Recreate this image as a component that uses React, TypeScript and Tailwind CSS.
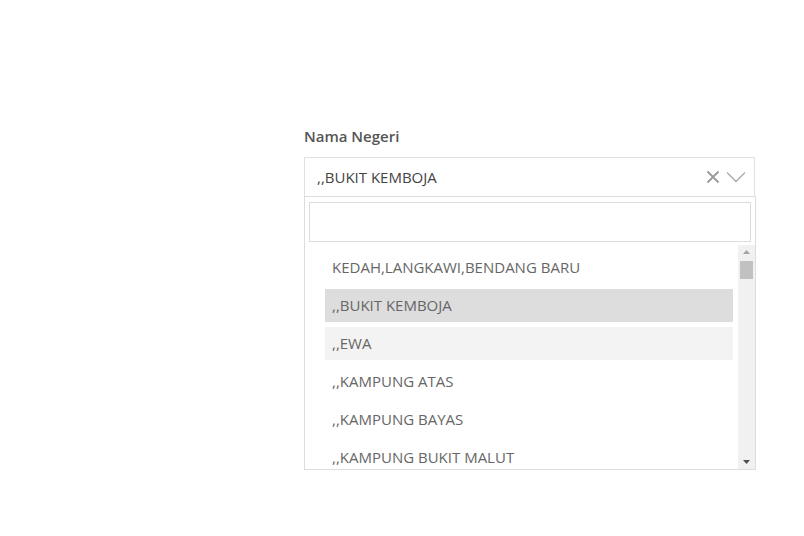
import {useState} from 'react'

const negeriOptions = [
  'KEDAH,LANGKAWI,BENDANG BARU',
  ',,BUKIT KEMBOJA',
  ',,EWA',
  ',,KAMPUNG ATAS',
  ',,KAMPUNG BAYAS',
  ',,KAMPUNG BUKIT MALUT',
]

export default function App() {
  const [selected] = useState(',,BUKIT KEMBOJA')
  const hovered = ',,EWA'

  return (
    <div
      className="min-h-[536px] w-full bg-white pt-[126px]"
      style={{fontFamily: '"Open Sans", "Liberation Sans", sans-serif'}}
    >
      <div className="ml-[304px] w-[452px]">
        <label className="mb-[10px] block text-[15px] font-semibold leading-[21px] text-[#555]">
          Nama Negeri
        </label>

        <div className="flex h-[40px] w-[451px] items-center border border-[#e0e0e0] bg-white pl-[12px] pr-[8px]">
          <span className="flex-1 text-[15px] text-[#444]">{selected}</span>
          <svg width="14" height="14" viewBox="0 0 14 14" className="mr-[6px]">
            <path d="M1.5 1.5 L12.5 12.5 M12.5 1.5 L1.5 12.5" stroke="#999" strokeWidth="1.8" />
          </svg>
          <svg width="20" height="12" viewBox="0 0 20 12">
            <path d="M1 1.5 L10 10.5 L19 1.5" stroke="#aaa" strokeWidth="1.4" fill="none" />
          </svg>
        </div>

        <div className="-mt-px border border-[#ddd] bg-white">
          <div className="px-[4px] pt-[5px] pb-[3px]">
            <input className="block h-[40px] w-full border border-[#ddd] bg-white px-2 text-[15px] outline-none" />
          </div>

          <div className="flex h-[224px]">
            <ul className="flex flex-1 flex-col gap-[5px] overflow-hidden pt-[6px] pl-[20px] pr-[5px]">
              {negeriOptions.map((option) => (
                <li
                  key={option}
                  className={`flex h-[33px] shrink-0 items-center px-[7px] text-[15px] text-[#666] ${
                    option === selected ? 'bg-[#ddd]' : option === hovered ? 'bg-[#f3f3f3]' : ''
                  }`}
                >
                  {option}
                </li>
              ))}
            </ul>

            <div className="flex w-[17px] flex-col items-center bg-[#f1f1f1] py-[5px]">
              <svg width="7" height="4" viewBox="0 0 7 4">
                <path d="M0 4 L3.5 0 L7 4 Z" fill="#a3a3a3" />
              </svg>
              <div className="mt-[7px] h-[18px] w-[13px] bg-[#c1c1c1]" />
              <div className="flex-1" />
              <svg width="7" height="4" viewBox="0 0 7 4">
                <path d="M0 0 L7 0 L3.5 4 Z" fill="#505050" />
              </svg>
            </div>
          </div>
        </div>
      </div>
    </div>
  )
}
